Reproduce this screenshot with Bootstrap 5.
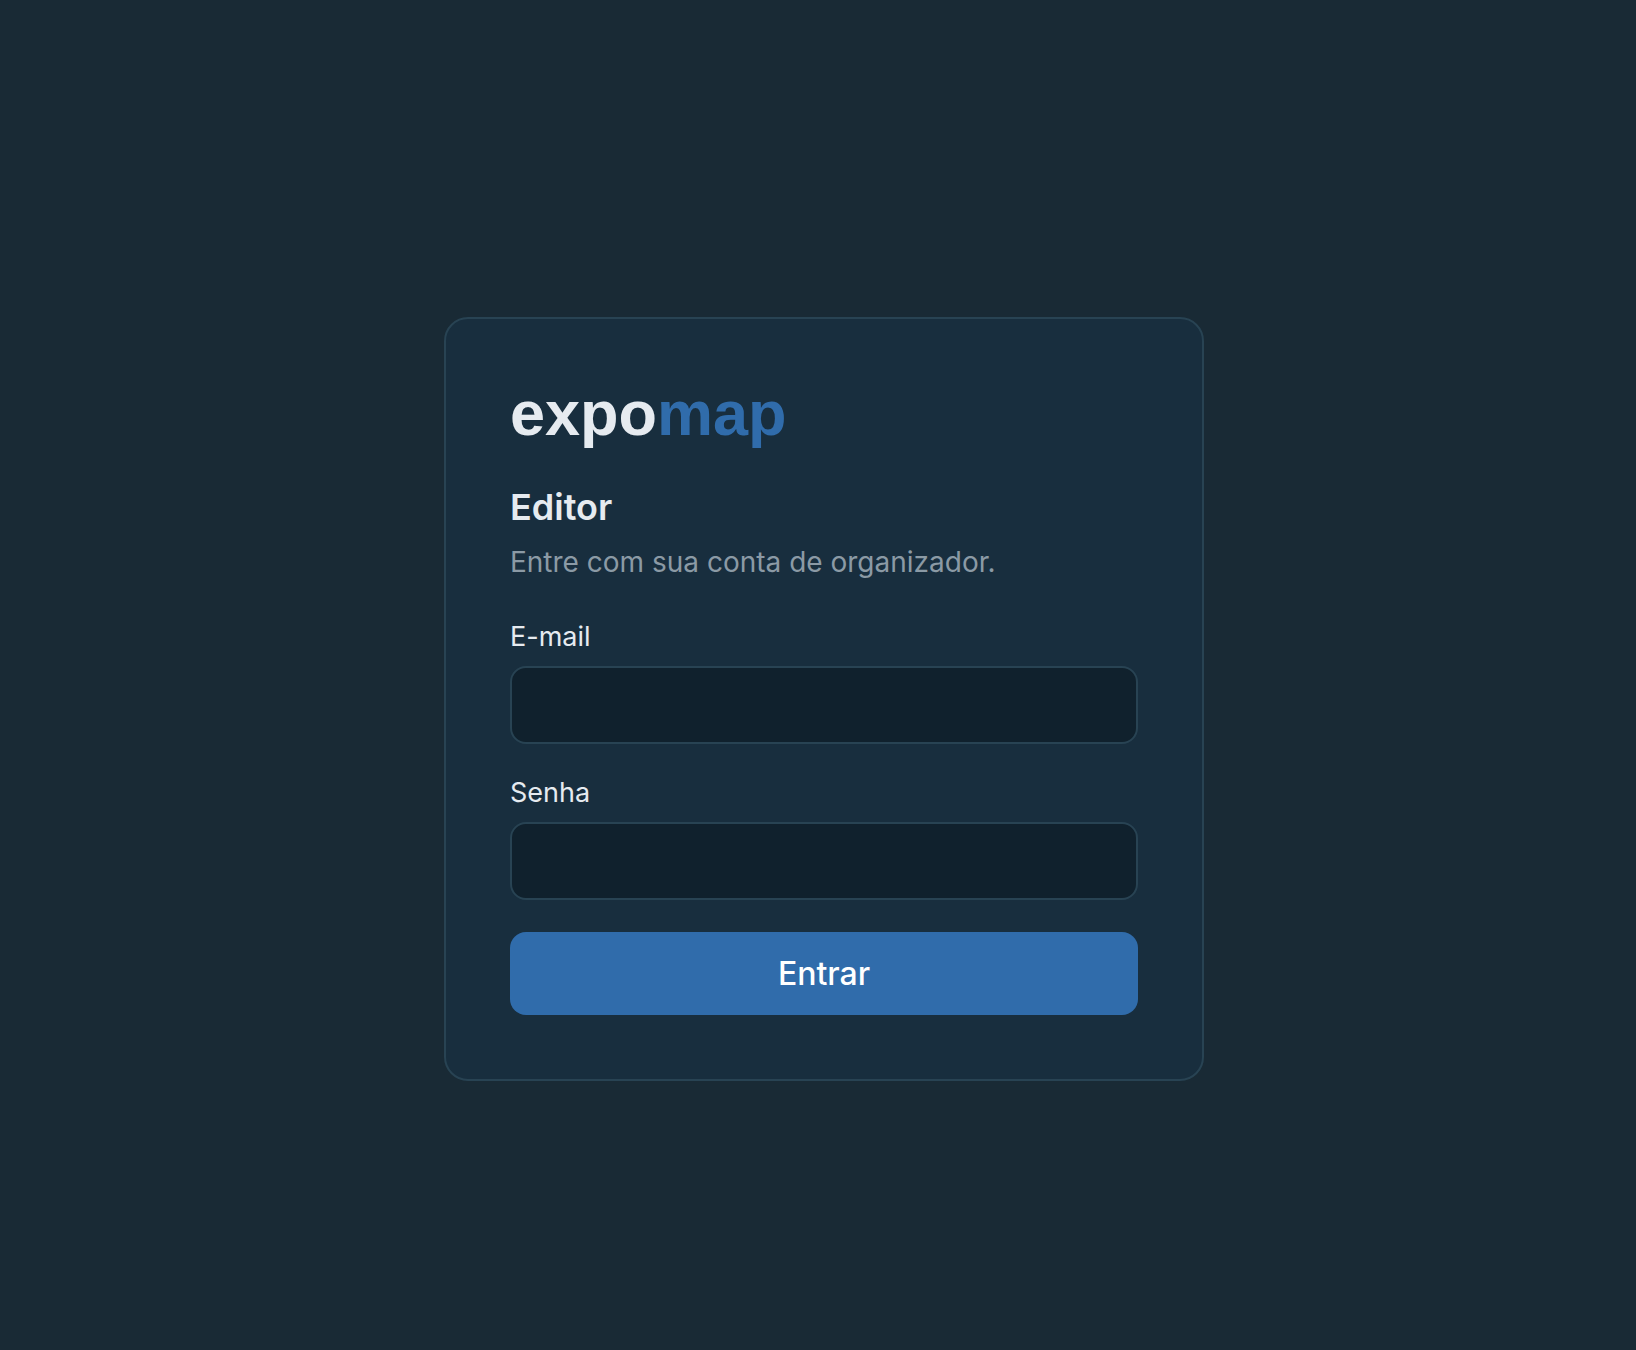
<!DOCTYPE html>
<html lang="pt-BR">
<head>
<meta charset="utf-8">
<meta name="viewport" content="width=device-width, initial-scale=1">
<title>expomap – Editor</title>
<link href="https://cdn.jsdelivr.net/npm/bootstrap@5.3.0/dist/css/bootstrap.min.css" rel="stylesheet">
<style>
body { background: #192a35; color: #e6ebf0; font-family: Inter, "Open Sans", sans-serif; font-size: 27px; line-height: 34px; }
.login-page { padding: 48px 0 0 12px; }
.login-card { max-width: 760px; padding: 64px; background: #182e3e; border: 2px solid #284353; border-radius: 24px; color: inherit; }
.brand { font: bold 63px/60px "Liberation Sans", sans-serif; margin-bottom: 42px; }
.brand-accent { color: #306cab; }
.login-title { font-size: 36px; line-height: 44px; font-weight: 600; margin-bottom: 16px; }
.login-hint { color: #8b9aa5; font-size: 28px; margin-bottom: 41px; }
.login-form { gap: 32px; }
.login-form .form-label { display: block; margin-bottom: 12px; }
.login-form .form-control { height: 78px; padding: 16px 24px; background: #10212d; border: 2px solid #284353; border-radius: 16px; color: inherit; font-size: inherit; }
.login-form .btn { height: 83px; background: #306cab; border: 0; border-radius: 16px; color: #fff; font-size: 32px; font-weight: 500; }
</style>
</head>
<body>
<main class="login-page d-flex align-items-center justify-content-center min-vh-100">
  <section class="login-card card w-100">
    <div class="brand">expo<span class="brand-accent">map</span></div>
    <h1 class="login-title">Editor</h1>
    <p class="login-hint">Entre com sua conta de organizador.</p>
    <form class="login-form d-flex flex-column">
      <div>
        <label class="form-label" for="email">E-mail</label>
        <input class="form-control" type="email" id="email" autocomplete="email">
      </div>
      <div>
        <label class="form-label" for="senha">Senha</label>
        <input class="form-control" type="password" id="senha" autocomplete="current-password">
      </div>
      <button class="btn w-100" type="submit">Entrar</button>
    </form>
  </section>
</main>
<script src="https://cdn.jsdelivr.net/npm/bootstrap@5.3.0/dist/js/bootstrap.bundle.min.js"></script>
</body>
</html>
